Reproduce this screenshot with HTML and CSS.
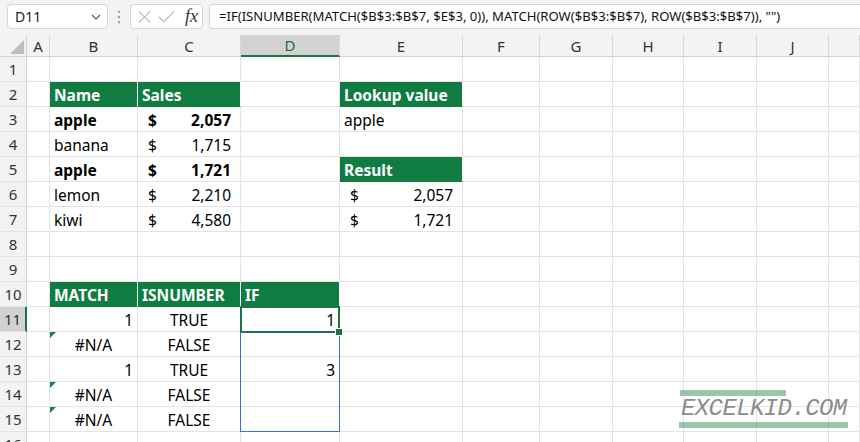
FILE: index.html
```html
<!DOCTYPE html>
<html lang="en">
<head>
  <meta charset="UTF-8">
  <meta name="viewport" content="width=device-width, initial-scale=1.0">
  <title>IF ISNUMBER MATCH</title>
  <link rel="stylesheet" href="styles.css">
</head>
<body>

<div class="toolbar">
  <div class="name-box">
    <span>D11</span>
    <svg class="chevron" width="10" height="6" viewBox="0 0 10 6"><path d="M1 1 L5 5 L9 1" fill="none" stroke="#555" stroke-width="1.1"/></svg>
  </div>
  <div class="dots">&#8942;</div>
  <div class="fx-box">
    <svg width="16" height="16" viewBox="0 0 16 16"><path d="M2 2 L14 14 M14 2 L2 14" stroke="#b8b8b8" stroke-width="1.2"/></svg>
    <svg width="18" height="16" viewBox="0 0 18 16"><path d="M1 8 L6 13 L17 2" fill="none" stroke="#b8b8b8" stroke-width="1.2"/></svg>
    <span class="fx">fx</span>
  </div>
  <div class="formula">=IF(ISNUMBER(MATCH($B$3:$B$7, $E$3, 0)), MATCH(ROW($B$3:$B$7), ROW($B$3:$B$7)), "")</div>
</div>

<div class="sheet" id="sheet"></div>

<div class="watermark">
  <div class="wm-bar short"></div>
  <div class="wm-text">EXCELKID.COM</div>
  <div class="wm-bar"></div>
</div>

<script>
const sheet = document.getElementById('sheet');
const letters = ['A', 'B', 'C', 'D', 'E', 'F', 'G', 'H', 'I', 'J', ''];

// cell contents by row, then column
const data = {
  2: { B: ['Name', 'hd'], C: ['Sales', 'hd'], E: ['Lookup value', 'hd'] },
  3: { B: ['apple', 'b'], C: ['2,057', 'acc b'], E: ['apple'] },
  4: { B: ['banana'], C: ['1,715', 'acc'] },
  5: { B: ['apple', 'b'], C: ['1,721', 'acc b'], E: ['Result', 'hd'] },
  6: { B: ['lemon'], C: ['2,210', 'acc'], E: ['2,057', 'acc'] },
  7: { B: ['kiwi'], C: ['4,580', 'acc'], E: ['1,721', 'acc'] },
  10: { B: ['MATCH', 'hd'], C: ['ISNUMBER', 'hd'], D: ['IF', 'hd'] },
  11: { B: ['1', 'r'], C: ['TRUE', 'c'], D: ['1', 'r sel'] },
  12: { B: ['#N/A', 'c err'], C: ['FALSE', 'c'] },
  13: { B: ['1', 'r'], C: ['TRUE', 'c'], D: ['3', 'r'] },
  14: { B: ['#N/A', 'c err'], C: ['FALSE', 'c'] },
  15: { B: ['#N/A', 'c err'], C: ['FALSE', 'c'] }
};

function addCell(cls, html) {
  const el = document.createElement('div');
  el.className = cls;
  if (html) el.innerHTML = html;
  sheet.appendChild(el);
}

// column header row
addCell('corner', '<svg width="14" height="14" viewBox="0 0 14 14"><path d="M14 0 L14 14 L0 14 Z" fill="#bdbdbd"/></svg>');
letters.forEach(l => addCell(l === 'D' ? 'col-head active' : 'col-head', l));

for (let r = 1; r <= 16; r++) {
  addCell(r === 11 ? 'row-head active' : 'row-head', String(r));
  letters.forEach(l => {
    const cell = (data[r] || {})[l];
    if (!cell) { addCell('cell'); return; }
    const cls = 'cell ' + (cell[1] || '');
    let html = cell[0];
    if (cls.includes('acc')) {
      html = '<span>$</span><span>' + cell[0] + '</span>';
    }
    if (cls.includes('sel')) {
      // spill range D11:D15 and the active cell frame
      html += '<div class="spill"></div><div class="active-cell"><div class="fill-handle"></div></div>';
    }
    addCell(cls, html);
  });
}
</script>

</body>
</html>
```

FILE: styles.css
```css
* {
  box-sizing: border-box;
}

body {
  margin: 0;
  width: 860px;
  height: 442px;
  overflow: hidden;
  background: #fff;
  font-family: "Noto Sans", "DejaVu Sans", sans-serif;
  color: #000;
}

/* formula bar */
.toolbar {
  height: 35px;
  background: #f3f3f3;
  display: flex;
  align-items: flex-start;
  padding: 4px 0 0 7px;
}

.name-box {
  width: 101px;
  height: 25px;
  background: #fff;
  border: 1px solid #d6d6d6;
  border-radius: 4px;
  display: flex;
  align-items: center;
  justify-content: space-between;
  padding: 0 6px 0 7px;
  font-size: 14px;
  color: #222;
}

.dots {
  width: 22px;
  text-align: center;
  color: #8a8a8a;
  font-size: 16px;
  line-height: 25px;
}

.fx-box {
  width: 73px;
  height: 25px;
  background: #fff;
  border: 1px solid #d6d6d6;
  border-radius: 4px;
  display: flex;
  align-items: center;
  gap: 6px;
  padding: 0 4px 0 6px;
}

.fx {
  font-family: "Liberation Serif", "DejaVu Serif", serif;
  font-style: italic;
  font-size: 18px;
  color: #333;
  margin-left: 4px;
}

.formula {
  flex: 1;
  height: 25px;
  margin-left: 6px;
  background: #fff;
  border: 1px solid #d6d6d6;
  border-right: none;
  border-radius: 4px 0 0 4px;
  padding: 0 9px;
  font-size: 13.1px;
  line-height: 23px;
  white-space: nowrap;
  overflow: hidden;
  color: #111;
}

/* grid */
.sheet {
  display: grid;
  grid-template-columns: 27px 23px 88px 103px 99px 123px 77px 73px 71px 73px 72px 1fr;
  grid-template-rows: 22px repeat(16, 25px);
  font-size: 15.5px;
}

.corner,
.col-head,
.row-head {
  background: #f3f3f3;
  color: #333;
}

.corner {
  display: flex;
  align-items: flex-end;
  justify-content: flex-end;
  padding: 0 2px 2px 0;
  border-right: 1px solid #d4d4d4;
  border-bottom: 1px solid #d4d4d4;
}

.col-head {
  display: flex;
  align-items: center;
  justify-content: center;
  font-size: 15px;
  border-right: 1px solid #d9d9d9;
  border-bottom: 1px solid #d4d4d4;
}

.col-head.active {
  background: #d2d2d2;
  color: #1d6b3d;
  border-bottom: 2px solid #1f7244;
}

.row-head {
  display: flex;
  align-items: center;
  justify-content: center;
  font-size: 15px;
  border-right: 1px solid #d4d4d4;
  border-bottom: 1px solid #e4e4e4;
}

.row-head.active {
  background: #d2d2d2;
  border-right: 2px solid #1f7244;
}

.cell {
  display: flex;
  align-items: center;
  padding: 1px 4px 0;
  white-space: nowrap;
  border-right: 1px solid #e3e3e3;
  border-bottom: 1px solid #e3e3e3;
  position: relative;
}

.hd {
  background: #107c41;
  color: #fff;
  font-weight: bold;
  border-right-color: #fff;
  border-bottom-color: #107c41;
}

.b {
  font-weight: bold;
}

.r {
  justify-content: flex-end;
}

.c {
  justify-content: center;
}

.acc {
  justify-content: space-between;
  padding: 1px 9px 0 10px;
}

.err::before {
  content: "";
  position: absolute;
  top: 0;
  left: 0;
  border-top: 6px solid #1e7f3a;
  border-right: 6px solid transparent;
}

/* selection */
.spill {
  position: absolute;
  top: -1px;
  left: -1px;
  width: 100px;
  height: 126px;
  border: 1px solid #3a6fd4;
  pointer-events: none;
  z-index: 1;
}

.active-cell {
  position: absolute;
  top: -1px;
  left: -1px;
  width: 100px;
  height: 27px;
  border: 2px solid #1f7244;
  pointer-events: none;
  z-index: 2;
}

.fill-handle {
  position: absolute;
  right: -4px;
  bottom: -4px;
  width: 6px;
  height: 6px;
  background: #1f7244;
  outline: 1px solid #fff;
}

/* watermark */
.watermark {
  position: absolute;
  right: 11px;
  bottom: 14px;
  width: 170px;
  display: flex;
  flex-direction: column;
  align-items: flex-start;
  pointer-events: none;
  z-index: 3;
}

.wm-bar {
  width: 169px;
  height: 6px;
  background: rgba(30, 128, 70, 0.45);
}

.wm-bar.short {
  width: 106px;
  margin-left: 1px;
}

.wm-text {
  font-family: "Liberation Mono", monospace;
  font-style: italic;
  font-size: 24px;
  line-height: 26px;
  color: #8c8c8c;
  letter-spacing: -0.6px;
  margin-left: 2px;
}
```
